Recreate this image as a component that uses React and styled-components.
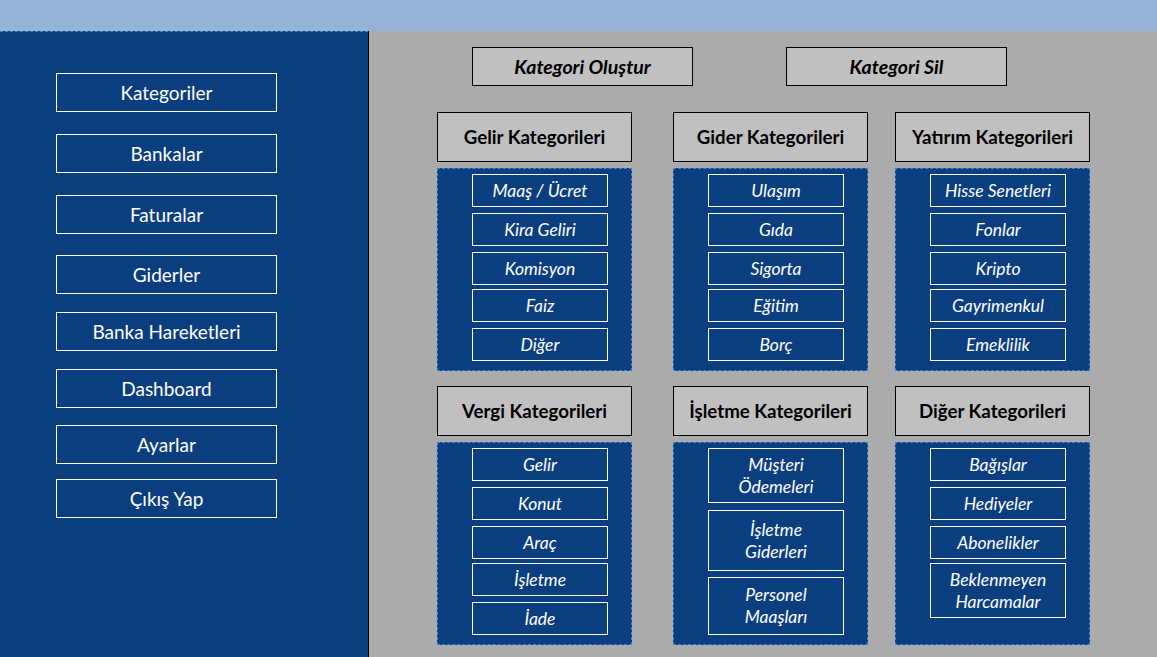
import React from "react";
import styled, { createGlobalStyle } from "styled-components";

const navItems = [
  { label: "Kategoriler", gap: 0 },
  { label: "Bankalar", gap: 22 },
  { label: "Faturalar", gap: 22 },
  { label: "Giderler", gap: 21 },
  { label: "Banka Hareketleri", gap: 18 },
  { label: "Dashboard", gap: 18 },
  { label: "Ayarlar", gap: 17 },
  { label: "Çıkış Yap", gap: 15 },
];

const shortGaps = [0, 6, 6, 4, 6];

const groups = [
  { title: "Gelir Kategorileri", items: ["Maaş / Ücret", "Kira Geliri", "Komisyon", "Faiz", "Diğer"] },
  { title: "Gider Kategorileri", items: ["Ulaşım", "Gıda", "Sigorta", "Eğitim", "Borç"] },
  { title: "Yatırım Kategorileri", items: ["Hisse Senetleri", "Fonlar", "Kripto", "Gayrimenkul", "Emeklilik"] },
  { title: "Vergi Kategorileri", items: ["Gelir", "Konut", "Araç", "İşletme", "İade"] },
  {
    title: "İşletme Kategorileri",
    items: [["Müşteri", "Ödemeleri"], ["İşletme", "Giderleri"], ["Personel", "Maaşları"]],
    heights: [55, 61, 58],
    gaps: [0, 7, 6],
  },
  {
    title: "Diğer Kategorileri",
    items: ["Bağışlar", "Hediyeler", "Abonelikler", ["Beklenmeyen", "Harcamalar"]],
    heights: [33, 33, 33, 55],
  },
];

const App = () => {
  return (
    <>
      <GlobalStyle />
      <Page>
        <TopBar />
        <Main>
          <Sidebar>
            {navItems.map((n) => (
              <NavButton key={n.label} $gap={n.gap}>
                {n.label}
              </NavButton>
            ))}
          </Sidebar>
          <Content>
            <Actions>
              <ActionButton>Kategori Oluştur</ActionButton>
              <ActionButton>Kategori Sil</ActionButton>
            </Actions>
            <Grid>
              {groups.map((g) => (
                <Group key={g.title}>
                  <GroupHeader>{g.title}</GroupHeader>
                  <GroupBox>
                    {g.items.map((it, i) => {
                      const lines = Array.isArray(it) ? it : [it];
                      const h = g.heights ? g.heights[i] : 33;
                      const gap = (g.gaps || shortGaps)[i];
                      return (
                        <Item key={i} $h={h} $gap={gap}>
                          {lines.map((l) => (
                            <span key={l}>{l}</span>
                          ))}
                        </Item>
                      );
                    })}
                  </GroupBox>
                </Group>
              ))}
            </Grid>
          </Content>
        </Main>
      </Page>
    </>
  );
};

const GlobalStyle = createGlobalStyle`
  html, body {
    margin: 0;
    padding: 0;
    overflow: hidden;
  }
  body {
    font-family: Lato, "Liberation Sans", sans-serif;
  }
`;

const Page = styled.div`
  width: 1157px;
  height: 657px;
  display: flex;
  flex-direction: column;
`;

const TopBar = styled.div`
  height: 31px;
  background: #95b3d6;
  flex-shrink: 0;
`;

const Main = styled.div`
  flex: 1;
  display: flex;
  min-height: 0;
`;

const Sidebar = styled.div`
  width: 368px;
  background: #0b3e7f;
  border-top: 1px dashed #3c82dc;
  box-sizing: border-box;
  padding: 41px 0 0 56px;
  display: flex;
  flex-direction: column;
`;

const NavButton = styled.div`
  width: 221px;
  height: 39px;
  box-sizing: border-box;
  margin-top: ${(p) => p.$gap}px;
  border: 1px solid #ffffff;
  color: #ffffff;
  font-size: 19px;
  display: flex;
  align-items: center;
  justify-content: center;
`;

const Content = styled.div`
  flex: 1;
  background: #ababab;
  border-left: 1px solid #000000;
  padding: 16px 0 0 0;
`;

const Actions = styled.div`
  display: flex;
  gap: 93px;
  padding-left: 103px;
`;

const ActionButton = styled.div`
  width: 221px;
  height: 39px;
  box-sizing: border-box;
  background: #c0c0c0;
  border: 1px solid #000000;
  color: #000000;
  font-weight: 700;
  font-style: italic;
  font-size: 19.5px;
  display: flex;
  align-items: center;
  justify-content: center;
`;

const Grid = styled.div`
  display: grid;
  grid-template-columns: 236px 222px 195px;
  row-gap: 15px;
  padding-left: 68px;
  margin-top: 26px;
`;

const Group = styled.div`
  width: 195px;
  display: flex;
  flex-direction: column;
  gap: 6px;
`;

const GroupHeader = styled.div`
  height: 50px;
  box-sizing: border-box;
  background: #c0c0c0;
  border: 1px solid #000000;
  color: #000000;
  font-weight: 700;
  font-size: 18.7px;
  display: flex;
  align-items: center;
  justify-content: center;
`;

const GroupBox = styled.div`
  height: 203px;
  box-sizing: border-box;
  background: #0b3e7f;
  border: 1px dashed #3c82dc;
  padding: 5px 0 0 34px;
  display: flex;
  flex-direction: column;
`;

const Item = styled.div`
  width: 136px;
  height: ${(p) => p.$h}px;
  flex-shrink: 0;
  box-sizing: border-box;
  margin-top: ${(p) => p.$gap}px;
  border: 1px solid #ffffff;
  color: #ffffff;
  font-style: italic;
  font-size: 17.5px;
  line-height: 22px;
  display: flex;
  flex-direction: column;
  align-items: center;
  justify-content: center;
`;

export default App;
